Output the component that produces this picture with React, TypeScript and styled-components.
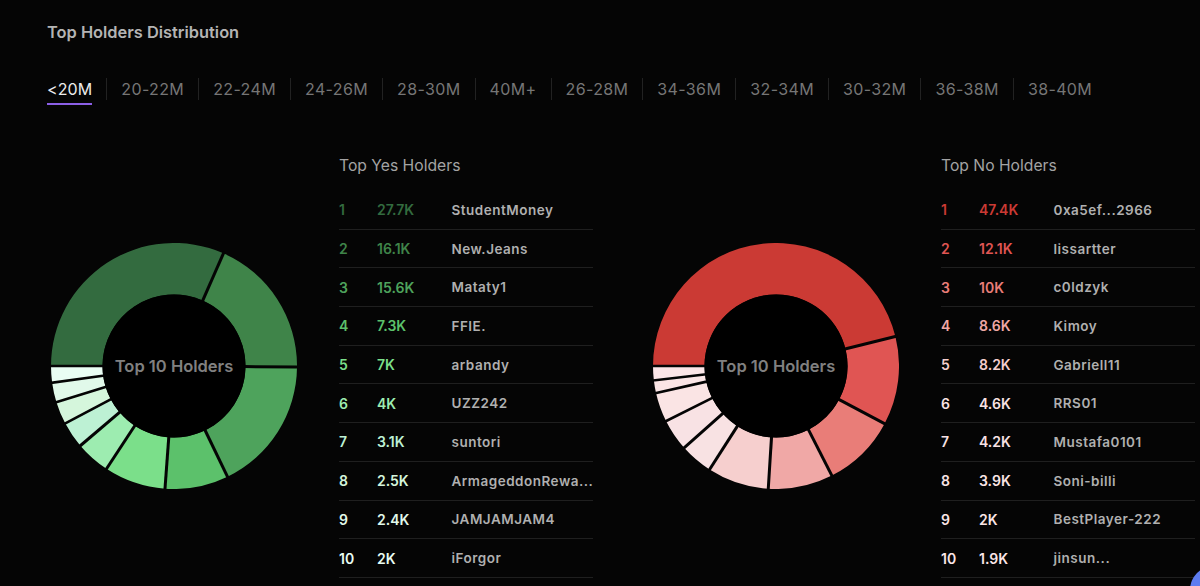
import React from "react";
import styled, { createGlobalStyle } from "styled-components";

const Global = createGlobalStyle`
  html, body { margin: 0; padding: 0; background: #050505; }
  body { font-family: Inter, "Noto Sans", sans-serif; overflow: hidden; }
`;

const Page = styled.main`
  width: 1200px;
  height: 586px;
  overflow: hidden;
  position: relative;
  background: #050505;
  padding: 22px 0 0 47px;
  box-sizing: border-box;
`;

const Title = styled.h1`
  margin: 0;
  font-size: 16.4px;
  line-height: 20px;
  font-weight: 600;
  color: #b4b4b4;
`;

const Tabs = styled.nav`
  display: flex;
  align-items: flex-start;
  margin-top: 36px;
`;

const Tab = styled.div<{ $active?: boolean }>`
  position: relative;
  height: 22px;
  line-height: 22px;
  font-size: 16px;
  font-weight: 400;
  letter-spacing: 0.37px;
  padding: 0 14px;
  border-left: 1px solid #222;
  color: ${(p) => (p.$active ? "#ececec" : "#767676")};
  &:first-child { padding-left: 0; padding-right: 14px; border-left: none; letter-spacing: 0.1px; }
`;

const Underline = styled.span`
  position: absolute;
  left: 0;
  right: 14px;
  top: 25px;
  height: 2px;
  background: #8b5fe6;
`;

const Content = styled.div`
  display: flex;
  margin-top: 44px;
`;

const Section = styled.section`
  display: flex;
  flex: none;
  width: 602px;
`;

const ChartSlot = styled.div`
  position: relative;
  flex: none;
  width: 288px;
  height: 246px;
  margin-top: 99px;
  margin-left: 4px;
`;

const Center = styled.div`
  position: absolute;
  left: 0;
  width: 246px;
  top: 113px;
  text-align: center;
  font-size: 16.5px;
  line-height: 20px;
  font-weight: 600;
  color: #808080;
`;

const Board = styled.div`
  flex: none;
  width: 254px;
  padding-top: 10px;
`;

const BoardTitle = styled.h2`
  margin: 0 0 13px;
  font-size: 15.7px;
  line-height: 24px;
  font-weight: 400;
  color: #a3a3a3;
`;

const Row = styled.div`
  display: flex;
  align-items: center;
  height: 37.7px;
  border-bottom: 1px solid #1f1f1f;
  font-size: 14px;
  font-weight: 600;
`;

const Rank = styled.span<{ $c: string }>`
  width: 38px;
  flex: none;
  color: ${(p) => p.$c};
`;

const Amount = styled.span<{ $c: string }>`
  width: 74.5px;
  flex: none;
  color: ${(p) => p.$c};
`;

const Name = styled.span`
  color: #b0b0b0;
  font-size: 13.5px;
  font-weight: 600;
  letter-spacing: 0.5px;
  white-space: nowrap;
`;

const Corner = styled.div`
  position: absolute;
  right: -38px;
  bottom: -28px;
  width: 48px;
  height: 48px;
  border-radius: 50%;
  background: #5d7cf0;
`;

const tabs = ["<20M","20-22M","22-24M","24-26M","28-30M","40M+","26-28M","34-36M","32-34M","30-32M","36-38M","38-40M"];

const greenStops = [23.7, 90.5, 154.2, 184.2, 213.3, 229.6, 242.2, 252.9, 262.2, 270];
const redStops = [76.1, 118, 153, 183.6, 212.7, 228.3, 243.4, 257.3, 263.3, 270];
const greens = ["#336b3f","#3f8449","#4ea35c","#5cc16b","#7bdf8a","#9decb0","#bdf1d4","#d5f6dc","#e1f9ea","#e9fdf3"];
const reds = ["#cb3a34","#e05553","#e97d78","#f0a8a6","#f6cfce","#f8e2e3","#f8e2e4","#fae4e4","#fbe5e6","#fce6e8"];

const yes: [string,string,string][] = [
  ["27.7K","StudentMoney","#336b3f"],["16.1K","New.Jeans","#3f8449"],["15.6K","Mataty1","#4ea35c"],
  ["7.3K","FFIE.","#5cc16b"],["7K","arbandy","#7bdf8a"],["4K","UZZ242","#9decb0"],
  ["3.1K","suntori","#bdf1d4"],["2.5K","ArmageddonRewa...","#d5f6dc"],["2.4K","JAMJAMJAM4","#e1f9ea"],["2K","iForgor","#e9fdf3"],
];
const no: [string,string,string][] = [
  ["47.4K","0xa5ef...2966","#cb3a34"],["12.1K","lissartter","#e05553"],["10K","c0ldzyk","#e97d78"],
  ["8.6K","Kimoy","#f0a8a6"],["8.2K","Gabriell11","#f6cfce"],["4.6K","RRS01","#f8e2e3"],
  ["4.2K","Mustafa0101","#f8e2e4"],["3.9K","Soni-billi","#fae4e4"],["2K","BestPlayer-222","#fbe5e6"],["1.9K","jinsun...","#fce6e8"],
];

const xy = (r: number, deg: number) => {
  const a = ((deg - 90) * Math.PI) / 180;
  return [123 + r * Math.cos(a), 123 + r * Math.sin(a)];
};
const pt = (r: number, deg: number) => xy(r, deg).map((n) => n.toFixed(2)).join(" ");

const Donut = ({ stops, colors }: { stops: number[]; colors: string[] }) => (
  <svg width="246" height="246" viewBox="0 0 246 246" style={{ display: "block" }}>
    {stops.map((end, i) => {
      const start = i === 0 ? -90 : stops[i - 1];
      const large = end - start > 180 ? 1 : 0;
      return (
        <path
          key={i}
          d={`M${pt(123, start)} A123 123 0 ${large} 1 ${pt(123, end)} L${pt(71.5, end)} A71.5 71.5 0 ${large} 0 ${pt(71.5, start)} Z`}
          fill={colors[i]}
        />
      );
    })}
    {stops.map((end, i) => {
      const [x1, y1] = xy(70, end);
      const [x2, y2] = xy(125, end);
      return <line key={i} x1={x1} y1={y1} x2={x2} y2={y2} stroke="#040404" strokeWidth={i < 6 ? 3 : 2.6} />;
    })}
    <circle cx="123" cy="123" r="71.5" fill="#000" />
  </svg>
);

const Holders = ({ title, rows }: { title: string; rows: [string,string,string][] }) => (
  <Board>
    <BoardTitle>{title}</BoardTitle>
    {rows.map(([v, n, c], i) => (
      <Row key={i}>
        <Rank $c={c}>{i + 1}</Rank>
        <Amount $c={c}>{v}</Amount>
        <Name>{n}</Name>
      </Row>
    ))}
  </Board>
);

export default function App() {
  return (
    <Page>
      <Global />
      <Title>Top Holders Distribution</Title>
      <Tabs>
        {tabs.map((t, i) => (
          <Tab key={t} $active={i === 0}>
            {t}
            {i === 0 && <Underline />}
          </Tab>
        ))}
      </Tabs>
      <Content>
        <Section>
          <ChartSlot>
            <Donut stops={greenStops} colors={greens} />
            <Center>Top 10 Holders</Center>
          </ChartSlot>
          <Holders title="Top Yes Holders" rows={yes} />
        </Section>
        <Section>
          <ChartSlot>
            <Donut stops={redStops} colors={reds} />
            <Center>Top 10 Holders</Center>
          </ChartSlot>
          <Holders title="Top No Holders" rows={no} />
        </Section>
      </Content>
      <Corner />
    </Page>
  );
}
